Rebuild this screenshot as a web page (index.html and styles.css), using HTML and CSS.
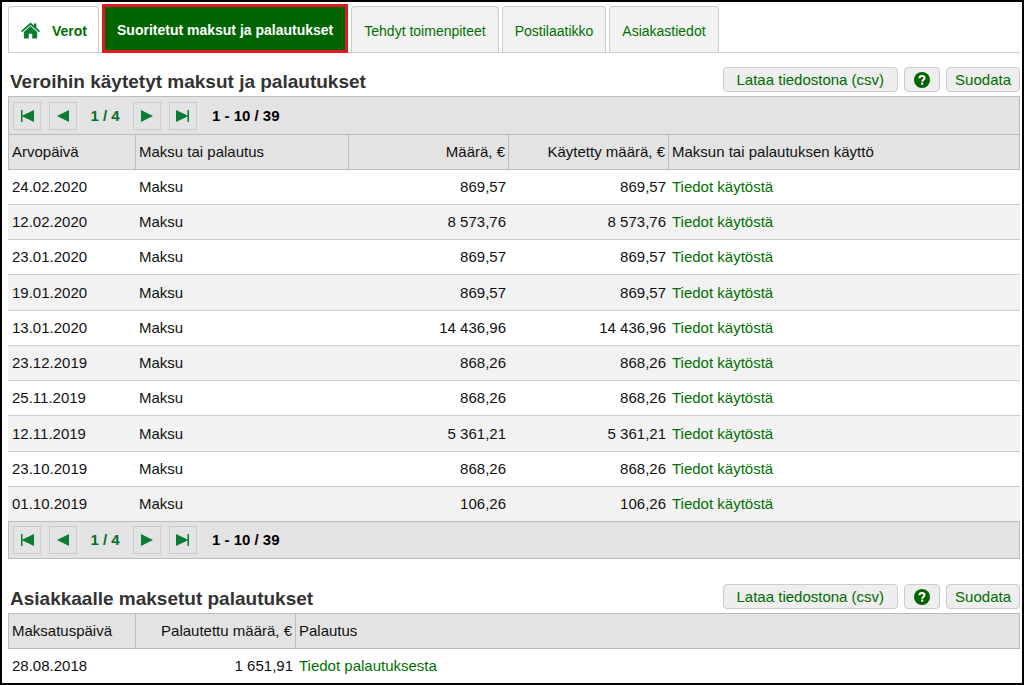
FILE: index.html
```html
<!DOCTYPE html>
<html lang="fi">
<head>
<meta charset="utf-8">
<meta name="viewport" content="width=device-width, initial-scale=1">
<title>Suoritetut maksut ja palautukset</title>
<link rel="stylesheet" href="styles.css">
</head>
<body>
<svg class="sprite" aria-hidden="true">
  <symbol id="first" viewBox="0 0 14 14"><path d="M1 1h1.500v5.500L14 1v12L2.500 7.500V13H1z"/></symbol>
  <symbol id="prev" viewBox="0 0 14 14"><path d="M13 1v12L1 7z"/></symbol>
  <symbol id="next" viewBox="0 0 14 14"><path d="M1 1v12l12-6z"/></symbol>
  <symbol id="last" viewBox="0 0 14 14"><path d="M13 1h-1.500v5.500L0 1v12l11.500-5.500V13H13z"/></symbol>
  <symbol id="help" viewBox="0 0 16 16"><circle cx="8" cy="8" r="8"/><path d="M5.400 6.300C5.500 4.600 6.500 4 8 4s2.500.800 2.500 2.100c0 1.500-2.300 1.700-2.300 3.600" fill="none" stroke="#fff" stroke-width="2"/><path d="M7.100 10.600h2.200v2.100H7.100z" fill="#fff"/></symbol>
</svg>
<main class="page">
  <nav class="tabs">
    <a class="tab tab-home" href="#verot">
      <svg class="home-icon" viewBox="0 0 20 17" aria-hidden="true"><path d="M10 3.800 17 10v7h-5.200v-5H8.200v5H3v-7z"/><path d="M10 0 13.700 3.300V1.200h2.500v4.300L20 9l-1.200 1.300L10 2.600l-8.800 7.700L0 9z"/></svg>
      <span>Verot</span>
    </a>
    <a class="tab tab-current" href="#maksut" aria-current="page">Suoritetut maksut ja palautukset</a>
    <a class="tab" href="#toimenpiteet">Tehdyt toimenpiteet</a>
    <a class="tab" href="#postilaatikko">Postilaatikko</a>
    <a class="tab" href="#asiakastiedot">Asiakastiedot</a>
  </nav>

  <section class="panel">
    <header class="panel-head">
      <h2>Veroihin käytetyt maksut ja palautukset</h2>
      <div class="actions">
        <button class="btn btn-csv" type="button">Lataa tiedostona (csv)</button>
        <button class="btn btn-help" type="button" aria-label="Ohje"><svg class="help-icon"><use href="#help"/></svg></button>
        <button class="btn" type="button">Suodata</button>
      </div>
    </header>
    <div class="pager pager-top">
      <button class="page-btn" type="button" aria-label="Ensimmäinen"><svg><use href="#first"/></svg></button>
      <button class="page-btn" type="button" aria-label="Edellinen"><svg><use href="#prev"/></svg></button>
      <span class="page-no">1 / 4</span>
      <button class="page-btn" type="button" aria-label="Seuraava"><svg><use href="#next"/></svg></button>
      <button class="page-btn" type="button" aria-label="Viimeinen"><svg><use href="#last"/></svg></button>
      <span class="page-range">1 - 10 / 39</span>
    </div>
    <table class="grid">
      <colgroup><col class="col-date"><col class="col-type"><col class="col-sum"><col class="col-sum"><col></colgroup>
      <thead>
        <tr><th scope="col">Arvopäivä</th><th scope="col">Maksu tai palautus</th><th scope="col" class="num">Määrä, €</th><th scope="col" class="num">Käytetty määrä, €</th><th scope="col">Maksun tai palautuksen käyttö</th></tr>
      </thead>
      <tbody>
        <tr><td>24.02.2020</td><td>Maksu</td><td class="num">869,57</td><td class="num">869,57</td><td><a href="#k1">Tiedot käytöstä</a></td></tr>
        <tr><td>12.02.2020</td><td>Maksu</td><td class="num">8 573,76</td><td class="num">8 573,76</td><td><a href="#k2">Tiedot käytöstä</a></td></tr>
        <tr><td>23.01.2020</td><td>Maksu</td><td class="num">869,57</td><td class="num">869,57</td><td><a href="#k3">Tiedot käytöstä</a></td></tr>
        <tr><td>19.01.2020</td><td>Maksu</td><td class="num">869,57</td><td class="num">869,57</td><td><a href="#k4">Tiedot käytöstä</a></td></tr>
        <tr><td>13.01.2020</td><td>Maksu</td><td class="num">14 436,96</td><td class="num">14 436,96</td><td><a href="#k5">Tiedot käytöstä</a></td></tr>
        <tr><td>23.12.2019</td><td>Maksu</td><td class="num">868,26</td><td class="num">868,26</td><td><a href="#k6">Tiedot käytöstä</a></td></tr>
        <tr><td>25.11.2019</td><td>Maksu</td><td class="num">868,26</td><td class="num">868,26</td><td><a href="#k7">Tiedot käytöstä</a></td></tr>
        <tr><td>12.11.2019</td><td>Maksu</td><td class="num">5 361,21</td><td class="num">5 361,21</td><td><a href="#k8">Tiedot käytöstä</a></td></tr>
        <tr><td>23.10.2019</td><td>Maksu</td><td class="num">868,26</td><td class="num">868,26</td><td><a href="#k9">Tiedot käytöstä</a></td></tr>
        <tr><td>01.10.2019</td><td>Maksu</td><td class="num">106,26</td><td class="num">106,26</td><td><a href="#k10">Tiedot käytöstä</a></td></tr>
      </tbody>
    </table>
    <div class="pager">
      <button class="page-btn" type="button" aria-label="Ensimmäinen"><svg><use href="#first"/></svg></button>
      <button class="page-btn" type="button" aria-label="Edellinen"><svg><use href="#prev"/></svg></button>
      <span class="page-no">1 / 4</span>
      <button class="page-btn" type="button" aria-label="Seuraava"><svg><use href="#next"/></svg></button>
      <button class="page-btn" type="button" aria-label="Viimeinen"><svg><use href="#last"/></svg></button>
      <span class="page-range">1 - 10 / 39</span>
    </div>
  </section>

  <section class="panel panel-refunds">
    <header class="panel-head">
      <h2>Asiakkaalle maksetut palautukset</h2>
      <div class="actions">
        <button class="btn btn-csv" type="button">Lataa tiedostona (csv)</button>
        <button class="btn btn-help" type="button" aria-label="Ohje"><svg class="help-icon"><use href="#help"/></svg></button>
        <button class="btn" type="button">Suodata</button>
      </div>
    </header>
    <table class="grid grid-short">
      <colgroup><col class="col-date"><col class="col-sum"><col></colgroup>
      <thead>
        <tr><th scope="col">Maksatuspäivä</th><th scope="col" class="num">Palautettu määrä, €</th><th scope="col">Palautus</th></tr>
      </thead>
      <tbody>
        <tr><td>28.08.2018</td><td class="num">1 651,91</td><td><a href="#p1">Tiedot palautuksesta</a></td></tr>
      </tbody>
    </table>
  </section>
</main>
</body>
</html>
```

FILE: styles.css
```css
* { box-sizing: border-box; }

body {
  margin: 0;
  color: #111;
  background: #fff;
  font: 15px/18px "Liberation Sans", Arial, sans-serif;
}

a { color: #007000; text-decoration: none; }

button { font: inherit; cursor: pointer; }

.sprite { display: none; }

.page {
  min-height: 100vh;
  padding: 2px 2px 0 6px;
  border: 2px solid #000;
}

/* Tabs */
.tabs {
  display: flex;
  align-items: flex-end;
  gap: 3px;
  border-bottom: 1px solid #ccc;
}

.tab {
  display: flex;
  align-items: center;
  height: 46px;
  padding: 2px 12px 0;
  border: 1px solid #ccc;
  border-bottom: 0;
  border-radius: 4px 4px 0 0;
  background: #f2f2f2;
  font-size: 14px;
}

.tab-home {
  gap: 12px;
  padding: 2px 11px 0 12px;
  background: #fff;
  font-weight: bold;
}

.home-icon { width: 19px; height: 17px; fill: #0a7d32; }

.tab-current {
  height: 49px;
  margin-bottom: -1px;
  padding: 2px 12px 0;
  border: 3px solid #e01b22;
  border-radius: 0;
  background: #006400;
  color: #fff;
  font-weight: bold;
}

/* Panels */
.panel { padding-top: 14px; }
.panel-refunds { padding-top: 25px; }

.panel-head {
  display: flex;
  justify-content: space-between;
  height: 29px;
  padding-left: 2px;
}

h2 {
  margin: 0;
  color: #333;
  font-size: 19px;
  line-height: 30px;
}

.actions { display: flex; align-items: flex-start; gap: 6px; }

.btn {
  display: flex;
  align-items: center;
  justify-content: center;
  height: 25px;
  padding: 0 8px;
  border: 1px solid #ccc;
  border-radius: 4px;
  background: #eee;
  color: #006b00;
}

.btn-csv { padding: 0 13px; }
.btn-help { padding: 0 9px; }

.help-icon { width: 16px; height: 16px; fill: #006400; }

/* Pager */
.pager {
  display: flex;
  align-items: center;
  gap: 8px;
  height: 38px;
  padding-left: 4px;
  border: 1px solid #bbb;
  background: #e3e3e3;
  font-weight: bold;
}

.pager-top { border-bottom: 0; }

.page-btn {
  display: grid;
  place-items: center;
  width: 28px;
  height: 28px;
  padding: 0;
  border: 1px solid #ccc;
  background: #e3e3e3;
}

.page-btn svg { width: 14px; height: 14px; fill: #0a7d32; }

.page-no { width: 40px; color: #00702c; text-align: center; }
.page-range { padding-left: 7px; color: #000; }

/* Tables */
.grid {
  width: 100%;
  border-collapse: separate;
  border-spacing: 0;
  table-layout: fixed;
}

.col-date { width: 128px; }
.col-type { width: 213px; }
.col-sum { width: 160px; }

th, td {
  height: 35px;
  padding: 0 3px;
  text-align: left;
  white-space: nowrap;
}

th {
  height: 36px;
  border: 1px solid #bbb;
  border-left: 0;
  background: #e3e3e3;
  font-weight: normal;
}

th:first-child { border-left: 1px solid #bbb; }

td { border-bottom: 1px solid #ccc; }
td:first-child { padding-left: 4px; }
tbody tr:nth-child(even) { background: #f2f2f2; }
tbody tr:nth-child(4n) td { height: 36px; }
tbody tr:last-child td { height: 34px; border-bottom: 0; }

.num { text-align: right; }
```
